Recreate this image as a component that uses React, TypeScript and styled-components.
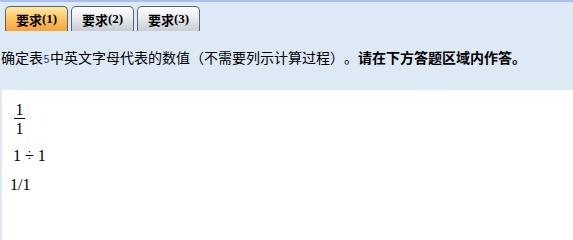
import React from "react";
import styled, { createGlobalStyle } from "styled-components";

const Global = createGlobalStyle`
  html, body { margin: 0; padding: 0; background: #ffffff; }
  body { width: 573px; height: 240px; overflow: hidden; }
`;

const Page = styled.div`
  width: 573px;
  height: 240px;
  display: flex;
  flex-direction: column;
  background: #dde9f5;
  border-top: 2px solid #a7bff3;
  box-sizing: border-box;
  font-family: "Noto Sans CJK SC", "Liberation Sans", sans-serif;
  text-spacing-trim: space-all;
`;

const TabBar = styled.div`
  display: flex;
  gap: 3px;
  padding: 4px 0 0 5px;
  height: 25px;
`;

const Tab = styled.div<{ $active?: boolean }>`
  width: 61px;
  height: 24px;
  border: 1px solid #566475;
  border-bottom: none;
  border-radius: 5px 5px 0 0;
  background: ${(p) =>
    p.$active
      ? "linear-gradient(to bottom, #ffe9a6 0%, #ffc866 45%, #f7a33c 100%)"
      : "linear-gradient(to bottom, #ffffff 0%, #eceeef 40%, #c9cdd1 100%)"};
  display: flex;
  align-items: center;
  justify-content: center;
  font-family: "Noto Sans CJK SC", sans-serif;
  font-weight: 700;
  font-size: 13px;
  color: #000;
  box-sizing: content-box;
`;

const TabNum = styled.span`
  font-family: "Liberation Serif", serif;
  font-weight: 700;
  font-size: 13px;
`;

const Prompt = styled.div`
  height: 59px;
  padding: 16px 0 0 1px;
  box-sizing: border-box;
  font-size: 14px;
  line-height: 20px;
  color: #000;
  white-space: nowrap;
  text-spacing-trim: space-all;
`;

const Num = styled.span`
  font-family: "Liberation Sans", sans-serif;
  font-size: 10px;
  color: #2a2a6a;
  display: inline-block;
  width: 7px;
  text-align: center;
`;

const Strong = styled.b`
  font-weight: 700;
`;

const Answer = styled.div`
  flex: 1;
  background: #ffffff;
  border-left: 2px solid #dde9f5;
  padding: 12px 0 0 8px;
  display: flex;
  flex-direction: column;
  align-items: flex-start;
  font-family: "Liberation Serif", serif;
  font-size: 16px;
  color: #000;
`;

const Fraction = styled.div`
  display: inline-flex;
  flex-direction: column;
  align-items: center;
  margin-left: 4px;
  line-height: 15px;
`;

const Bar = styled.div`
  width: 11px;
  height: 1px;
  background: #000;
  margin: 1px 0 2px;
`;

const Expr = styled.div`
  margin: 11px 0 0 3px;
  line-height: 18px;
  display: flex;
  gap: 4px;
`;

const Plain = styled.div`
  margin: 11px 0 0 0;
  line-height: 18px;
  font-size: 16px;
`;

export default function App() {
  return (
    <>
      <Global />
      <Page>
        <TabBar>
          <Tab $active>
            要求<TabNum>(1)</TabNum>
          </Tab>
          <Tab>
            要求<TabNum>(2)</TabNum>
          </Tab>
          <Tab>
            要求<TabNum>(3)</TabNum>
          </Tab>
        </TabBar>
        <Prompt>
          确定表<Num>5</Num>中英文字母代表的数值（不需要列示计算过程）。
          <Strong>请在下方答题区域内作答。</Strong>
        </Prompt>
        <Answer>
          <Fraction>
            <span>1</span>
            <Bar />
            <span>1</span>
          </Fraction>
          <Expr>
            <span>1</span>
            <span>÷</span>
            <span>1</span>
          </Expr>
          <Plain>1/1</Plain>
        </Answer>
      </Page>
    </>
  );
}
